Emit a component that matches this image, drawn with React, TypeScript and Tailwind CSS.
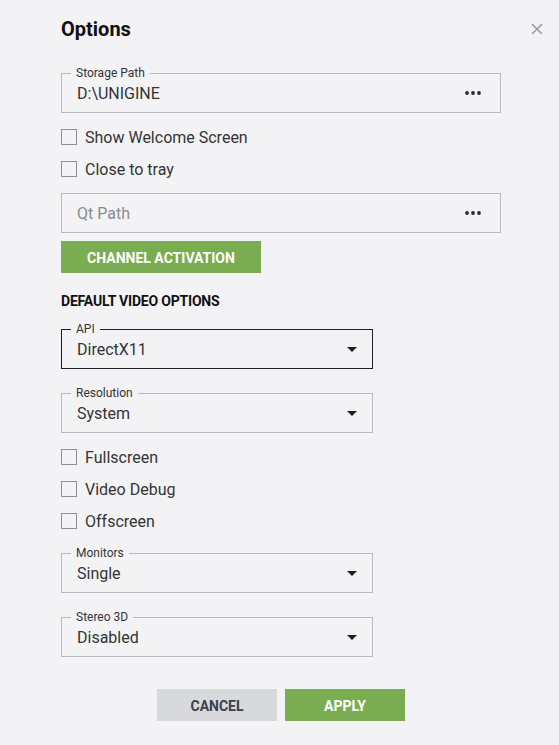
import React from "react";

const font = { fontFamily: "Roboto, 'Noto Sans', sans-serif" };

function Dots() {
  return (
    <svg width="16" height="4" viewBox="0 0 16 4" className="shrink-0">
      <circle cx="2" cy="2" r="1.9" fill="#2b2b2b" />
      <circle cx="8" cy="2" r="1.9" fill="#2b2b2b" />
      <circle cx="14" cy="2" r="1.9" fill="#2b2b2b" />
    </svg>
  );
}

function Arrow() {
  return (
    <svg width="10" height="5" viewBox="0 0 10 5" className="shrink-0">
      <path d="M0 0 L10 0 L5 5 Z" fill="#1f1f1f" />
    </svg>
  );
}

function Field({
  label,
  value,
  placeholder,
  dark,
  select,
}: {
  label?: string;
  value?: string;
  placeholder?: string;
  dark?: boolean;
  select?: boolean;
}) {
  return (
    <div
      className={`relative flex h-10 items-center border pl-[15px] ${
        select ? "w-[312px] pr-[15px]" : "w-[440px] pr-[19px]"
      } ${dark ? "border-[#1f1f1f]" : "border-[#b9b9c1]"}`}
    >
      {label && (
        <span className="absolute -top-[8px] left-[9px] h-[14px] bg-[#f3f3f6] px-[5px] text-[12px] leading-[14px] text-[#333333]">
          {label}
        </span>
      )}
      <span
        className={`mt-[2px] flex-1 text-[16px] leading-5 ${
          value ? "text-[#333333]" : "text-[#8a8a8f]"
        }`}
      >
        {value ?? placeholder}
      </span>
      {select ? <Arrow /> : <Dots />}
    </div>
  );
}

function Check({ label }: { label: string }) {
  return (
    <div className="flex h-8 items-center gap-2">
      <div className="h-4 w-4 border border-[#8e8e97]" />
      <span className="mt-[2px] text-[16px] leading-5 text-[#333333]">{label}</span>
    </div>
  );
}

export default function App() {
  return (
    <div className="h-[745px] w-full bg-[#f3f3f6]" style={font}>
      <div className="flex items-center justify-between pl-[61px] pr-[16px] pt-[15px]">
        <h1 className="text-[20px] font-bold leading-7 text-[#111111]">Options</h1>
        <svg width="12" height="12" viewBox="0 0 12 12">
          <path d="M1 1 L11 11 M11 1 L1 11" stroke="#9a9aa2" strokeWidth="1.6" />
        </svg>
      </div>
      <div className="flex w-[501px] flex-col pl-[61px]">
        <div className="mt-[30px]">
          <Field label="Storage Path" value="D:\UNIGINE" />
        </div>
        <div className="mt-2">
          <Check label="Show Welcome Screen" />
          <Check label="Close to tray" />
        </div>
        <div className="mt-2">
          <Field placeholder="Qt Path" />
        </div>
        <button className="mt-2 flex h-8 w-[200px] items-center justify-center bg-[#7aad51] pt-[2px] text-[14px] font-bold text-white">
          CHANNEL ACTIVATION
        </button>
        <div className="mt-[18px] h-5 text-[14px] font-bold leading-5 tracking-[-0.2px] text-[#111111]">
          DEFAULT VIDEO OPTIONS
        </div>
        <div className="mt-[18px]">
          <Field label="API" value="DirectX11" dark select />
        </div>
        <div className="mt-6">
          <Field label="Resolution" value="System" select />
        </div>
        <div className="mt-2">
          <Check label="Fullscreen" />
          <Check label="Video Debug" />
          <Check label="Offscreen" />
        </div>
        <div className="mt-4">
          <Field label="Monitors" value="Single" select />
        </div>
        <div className="mt-6">
          <Field label="Stereo 3D" value="Disabled" select />
        </div>
        <div className="mt-8 flex justify-center gap-2">
          <button className="flex h-8 w-[120px] items-center justify-center bg-[#d8d9dd] pt-[2px] text-[14px] font-bold text-[#3b404c]">
            CANCEL
          </button>
          <button className="flex h-8 w-[120px] items-center justify-center bg-[#7aad51] pt-[2px] text-[14px] font-bold text-white">
            APPLY
          </button>
        </div>
      </div>
    </div>
  );
}
